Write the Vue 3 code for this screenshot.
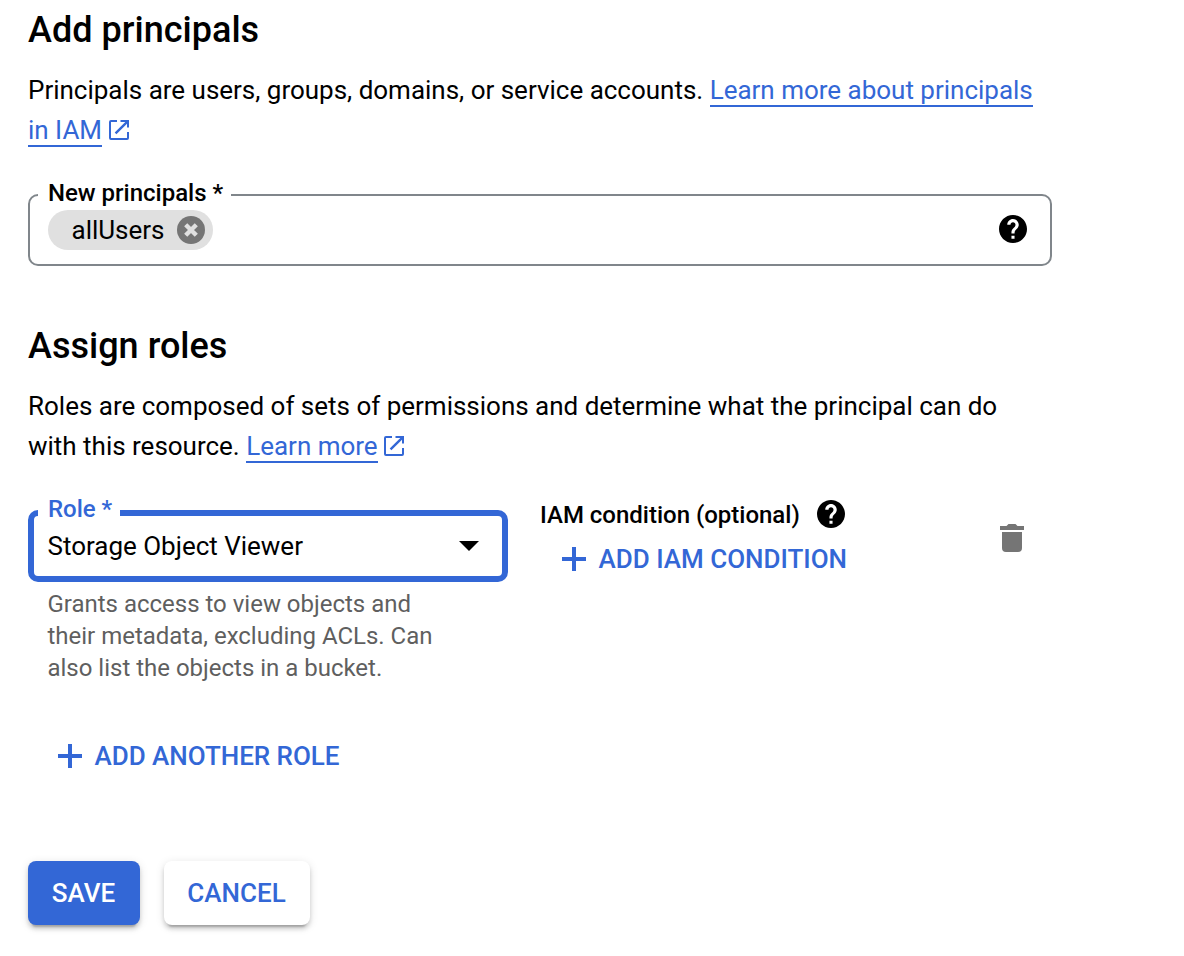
<script setup>
const icons = {
  open: 'M8 0v2H2v16h16v-6h2v6a2 2 0 0 1-2 2H2a2 2 0 0 1-2-2V2a2 2 0 0 1 2-2zM11.5 0H20v7.5h-2V3.7L7.4 14.3 5.7 12.6 16.3 2h-4.8z',
  help: 'M12 2C6.48 2 2 6.48 2 12s4.48 10 10 10 10-4.48 10-10S17.52 2 12 2zm1.1 17h-2.2v-2.2h2.2v2.2zm2.07-7.55l-.9.92C13.55 13.1 13.1 13.6 13.1 15.2h-2.2v-.7c0-1.1.45-2.1 1.17-2.83l1.24-1.26c.3-.36.49-.86.49-1.41 0-1-.8-1.8-1.8-1.8s-1.8.8-1.8 1.8H7.9c0-2.21 1.89-4.1 4.1-4.1s4.1 1.89 4.1 4.1c0 .88-.36 1.78-.93 2.45z',
}
const helperLines = [
  'Grants access to view objects and',
  'their metadata, excluding ACLs. Can',
  'also list the objects in a bucket.',
]
</script>

<template>
  <main class="panel">
    <section class="principals">
      <h2>Add principals</h2>
      <p class="intro">
        Principals are users, groups, domains, or service accounts. <a class="link">Learn more about principals</a><br />
        <a class="link">in IAM</a><svg class="open" viewBox="0 0 20 20"><path :d="icons.open" /></svg>
      </p>
      <div class="field chips">
        <label class="label">New principals *</label>
        <span class="chip">
          <span class="chip-text">allUsers</span>
          <svg class="remove" viewBox="0 0 28 28">
            <circle cx="14" cy="14" r="14" fill="#757575" />
            <path d="M8.7 8.7l10.6 10.6M19.3 8.7L8.7 19.3" stroke="#e0e0e0" stroke-width="4.4" />
          </svg>
        </span>
        <svg class="help" viewBox="2 2 20 20"><path :d="icons.help" /></svg>
      </div>
    </section>

    <section class="roles">
      <h2>Assign roles</h2>
      <p class="intro">
        Roles are composed of sets of permissions and determine what the principal can do<br />
        with this resource. <a class="link">Learn more</a><svg class="open near" viewBox="0 0 20 20"><path :d="icons.open" /></svg>
      </p>
      <div class="role-row">
        <div class="role-col">
          <div class="field select">
            <label class="label">Role *</label>
            <span class="value">Storage Object Viewer</span>
            <svg class="caret" viewBox="0 0 20 10"><path d="M0 0h20L10 10z" /></svg>
          </div>
          <p class="helper">
            <span v-for="line in helperLines" :key="line">{{ line }}</span>
          </p>
        </div>
        <div class="cond-col">
          <div class="cond-title">
            <span class="cond-text">IAM condition (optional)</span>
            <svg class="help" viewBox="2 2 20 20"><path :d="icons.help" /></svg>
          </div>
          <button class="text-btn">
            <svg class="plus" viewBox="0 0 24 24"><path d="M10 0h4v10h10v4H14v10h-4V14H0v-4h10z" /></svg>
            <span>ADD IAM CONDITION</span>
          </button>
        </div>
        <svg class="trash" viewBox="0 0 24 28"><path d="M2 8h20v16a4 4 0 0 1-4 4H6a4 4 0 0 1-4-4zM0 2h6.5l2-2h7l2 2H24v4H0z" /></svg>
      </div>
      <button class="text-btn another">
        <svg class="plus" viewBox="0 0 24 24"><path d="M10 0h4v10h10v4H14v10h-4V14H0v-4h10z" /></svg>
        <span>ADD ANOTHER ROLE</span>
      </button>
    </section>

    <footer class="actions">
      <button class="btn primary">SAVE</button>
      <button class="btn cancel">CANCEL</button>
    </footer>
  </main>
</template>

<style>
body {
  background: #fff;
}
</style>

<style scoped>
.panel {
  box-sizing: border-box;
  width: 1184px;
  height: 956px;
  padding: 6px 132px 0 28px;
  overflow: hidden;
  font: 400 26px/40px Roboto, sans-serif;
  letter-spacing: -0.01px;
  color: #000;
}
h2 {
  margin: 0;
  font-size: 36px;
  line-height: 48px;
  font-weight: 500;
  letter-spacing: 0.02px;
}
.intro {
  margin: 16px 0 44px;
  white-space: nowrap;
}
.link {
  display: inline-block;
  height: 35px;
  line-height: 40px;
  border-bottom: 2px solid #3367d6;
  color: #3367d6;
}
.open {
  width: 20px;
  height: 20px;
  margin-left: 7px;
  vertical-align: -1px;
  fill: #3367d6;
}
.near {
  margin-left: 6px;
}
.field {
  position: relative;
  box-sizing: border-box;
  display: flex;
  align-items: center;
  height: 72px;
  border: 2px solid #80868b;
  border-radius: 10px;
}
.label {
  position: absolute;
  top: -18px;
  left: 8px;
  padding: 0 8px 0 10px;
  background: #fff;
  font-size: 24px;
  line-height: 30px;
  font-weight: 500;
  white-space: nowrap;
}
.chips {
  justify-content: space-between;
  padding: 0 23px 0 18px;
}
.chips .help {
  margin-bottom: 2px;
}
.chip {
  box-sizing: border-box;
  display: flex;
  align-items: center;
  justify-content: space-between;
  width: 165px;
  height: 40px;
  padding: 0 8px 0 23.5px;
  border-radius: 20px;
  background: #e0e0e0;
}
.remove,
.help {
  display: block;
  width: 28px;
  height: 28px;
}
.roles {
  margin-top: 56px;
}
.role-row {
  display: flex;
  align-items: flex-start;
}
.role-col {
  width: 480px;
}
.select {
  justify-content: space-between;
  padding: 0 23px 0 13.5px;
  border: 6px solid #3367d6;
}
.select .label {
  top: -22px;
  left: 4px;
  color: #3367d6;
}
.caret {
  width: 20px;
  height: 10px;
}
.helper {
  margin: 6px 0 0 19.5px;
  font-size: 24px;
  line-height: 32px;
  color: #5f5f5f;
}
.helper span {
  display: block;
}
.cond-col {
  margin-left: 32px;
  width: 460px;
}
.cond-title {
  display: flex;
  align-items: center;
  gap: 17px;
  margin-top: -10px;
  height: 28px;
  font-size: 24px;
  font-weight: 500;
}
.cond-text {
  padding-top: 2px;
}
.text-btn {
  display: flex;
  align-items: center;
  gap: 12.5px;
  margin: 11px 0 0 22px;
  padding: 0;
  border: 0;
  background: none;
  font: 500 26px/40px Roboto, sans-serif;
  color: #3367d6;
}
.plus {
  width: 24px;
  height: 24px;
  fill: #3367d6;
}
.trash {
  width: 24px;
  height: 28px;
  margin-top: 14px;
  fill: #757575;
}
.another {
  margin: 52px 0 0 30px;
  letter-spacing: -0.03px;
}
.actions {
  display: flex;
  gap: 24px;
  margin-top: 85px;
}
.btn {
  height: 64px;
  padding: 0 1px 0 0;
  border: 0;
  border-radius: 8px;
  background: #fff;
  box-shadow: 0 6px 2px -4px rgba(0, 0, 0, 0.2), 0 4px 4px rgba(0, 0, 0, 0.14), 0 2px 10px rgba(0, 0, 0, 0.12);
  font: 500 26px/64px Roboto, sans-serif;
  color: #3367d6;
}
.primary {
  width: 112px;
  background: #3367d6;
  color: #fff;
}
.cancel {
  width: 146px;
}
</style>
